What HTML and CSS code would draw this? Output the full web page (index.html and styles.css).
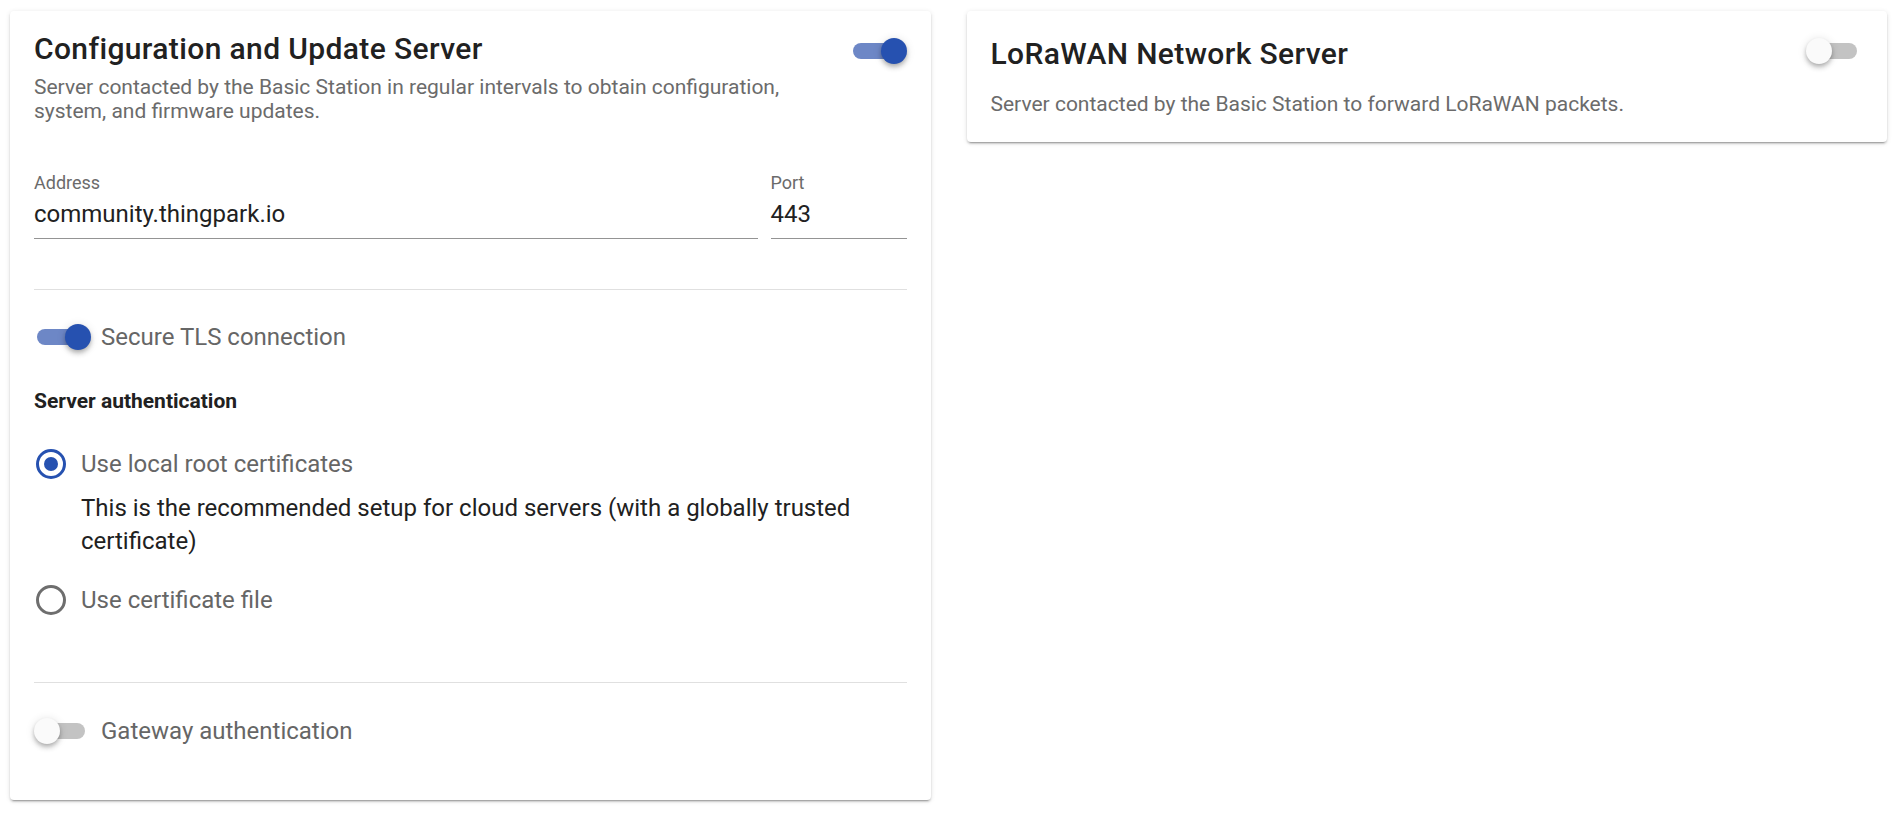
FILE: index.html
```html
<!DOCTYPE html>
<html lang="en">
<head>
<meta charset="utf-8">
<title>Basic Station servers</title>
<link rel="stylesheet" href="styles.css">
</head>
<body>
<div class="page">
  <section class="card card-main">
    <header class="card-head">
      <div class="head-text">
        <h2 class="card-title">Configuration and Update Server</h2>
        <p class="card-desc">Server contacted by the Basic Station in regular intervals to obtain configuration, system, and firmware updates.</p>
      </div>
      <span class="switch on head-switch"><span class="track"></span><span class="thumb"></span></span>
    </header>

    <div class="fields">
      <div class="field field-address">
        <span class="field-label">Address</span>
        <span class="field-value">community.thingpark.io</span>
      </div>
      <div class="field field-port">
        <span class="field-label">Port</span>
        <span class="field-value">443</span>
      </div>
    </div>

    <div class="divider first-divider"></div>

    <div class="switch-row tls-row">
      <span class="switch on"><span class="track"></span><span class="thumb"></span></span>
      <span class="switch-label">Secure TLS connection</span>
    </div>

    <h3 class="section-title">Server authentication</h3>

    <div class="radio-row radio-first">
      <span class="radio checked"><span class="dot"></span></span>
      <span class="radio-label">Use local root certificates</span>
    </div>
    <p class="radio-hint">This is the recommended setup for cloud servers (with a globally trusted certificate)</p>

    <div class="radio-row radio-second">
      <span class="radio"></span>
      <span class="radio-label">Use certificate file</span>
    </div>

    <div class="divider second-divider"></div>

    <div class="switch-row gateway-row">
      <span class="switch"><span class="track"></span><span class="thumb"></span></span>
      <span class="switch-label">Gateway authentication</span>
    </div>
  </section>

  <section class="card card-side">
    <header class="card-head">
      <h2 class="card-title">LoRaWAN Network Server</h2>
      <span class="switch head-switch side-switch"><span class="track"></span><span class="thumb"></span></span>
    </header>
    <p class="card-desc side-desc">Server contacted by the Basic Station to forward LoRaWAN packets.</p>
  </section>
</div>
</body>
</html>
```

FILE: styles.css
```css
* { box-sizing: border-box; }

html, body {
  margin: 0;
  padding: 0;
  background: #ffffff;
}

body {
  font-family: Roboto, "Liberation Sans", Arial, sans-serif;
  color: #212121;
}

.page {
  display: grid;
  grid-template-columns: 1fr 1fr;
  column-gap: 36px;
  align-items: start;
  padding: 11px 10px;
}

.card {
  background: #ffffff;
  border-radius: 4px;
  box-shadow: 0 3px 1px -2px rgba(0,0,0,.2), 0 2px 2px 0 rgba(0,0,0,.14), 0 1px 5px 0 rgba(0,0,0,.12);
}

.card-main {
  padding: 21px 24px 54px;
}

.card-side {
  padding: 26px 24px 26px;
}

.card-head {
  display: flex;
  justify-content: space-between;
  align-items: flex-start;
}

.head-text {
  max-width: 790px;
}

.card-title {
  margin: 0;
  font-size: 30px;
  font-weight: 500;
  line-height: 34px;
  color: #212121;
  letter-spacing: 0.0125em;
}

.card-desc {
  margin: 9px 0 0;
  font-size: 21px;
  line-height: 24px;
  color: #6b6b6b;
}

.side-desc {
  margin-top: 21px;
}

/* switches */
.switch {
  position: relative;
  display: inline-block;
  flex: 0 0 auto;
  width: 54px;
  height: 26px;
}

.switch .track {
  display: block;
  margin: 5px 3px 0;
  width: 48px;
  height: 16px;
  border-radius: 8px;
  background: #c3c3c3;
}

.switch.on .track {
  background: #6d87c6;
}

.switch .thumb {
  position: absolute;
  top: 0;
  left: 0;
  width: 26px;
  height: 26px;
  border-radius: 50%;
  background: #fafafa;
  box-shadow: 0 2px 4px -1px rgba(0,0,0,.2), 0 4px 5px 0 rgba(0,0,0,.14), 0 1px 10px 0 rgba(0,0,0,.12);
}

.switch.on .thumb {
  left: 31px;
  background: #2651b0;
}

.head-switch {
  margin-top: 6px;
  margin-right: 3px;
}

.side-switch {
  margin-top: 1px;
}

.switch-row {
  display: flex;
  align-items: center;
  height: 30px;
}

.switch-label {
  margin-left: 13px;
  font-size: 24px;
  color: #666666;
}

.tls-row { margin-top: 32px; }
.gateway-row { margin-top: 33px; }

/* fields */
.fields {
  display: flex;
  gap: 13px;
  margin-top: 50px;
}

.field {
  display: flex;
  flex-direction: column;
  padding-bottom: 9px;
  border-bottom: 1px solid #949494;
}

.field-address { flex: 1 1 auto; }
.field-port { flex: 0 0 136px; }

.field-label {
  font-size: 18px;
  line-height: 20px;
  color: #6b6b6b;
}

.field-value {
  margin-top: 6px;
  font-size: 24px;
  line-height: 30px;
  color: #212121;
}

.divider {
  height: 0;
  border-top: 1px solid #e0e0e0;
}

.first-divider { margin-top: 50px; }
.second-divider { margin-top: 67px; }

.section-title {
  margin: 37px 0 0;
  font-size: 21px;
  font-weight: 700;
  line-height: 24px;
  color: #212121;
}

/* radios */
.radio-row {
  display: flex;
  align-items: center;
  height: 30px;
}

.radio-first { margin-top: 36px; }
.radio-second { margin-top: 27px; }

.radio {
  display: flex;
  align-items: center;
  justify-content: center;
  flex: 0 0 auto;
  width: 30px;
  height: 30px;
  margin: 0 2px;
  border: 3px solid #6e6e6e;
  border-radius: 50%;
}

.radio.checked {
  border-color: #2651b0;
}

.radio .dot {
  width: 14px;
  height: 14px;
  border-radius: 50%;
  background: #2651b0;
}

.radio-label {
  margin-left: 13px;
  font-size: 24px;
  color: #666666;
}

.radio-hint {
  margin: 13px 0 0;
  padding-left: 47px;
  font-size: 24px;
  line-height: 33px;
  color: #212121;
}
```
